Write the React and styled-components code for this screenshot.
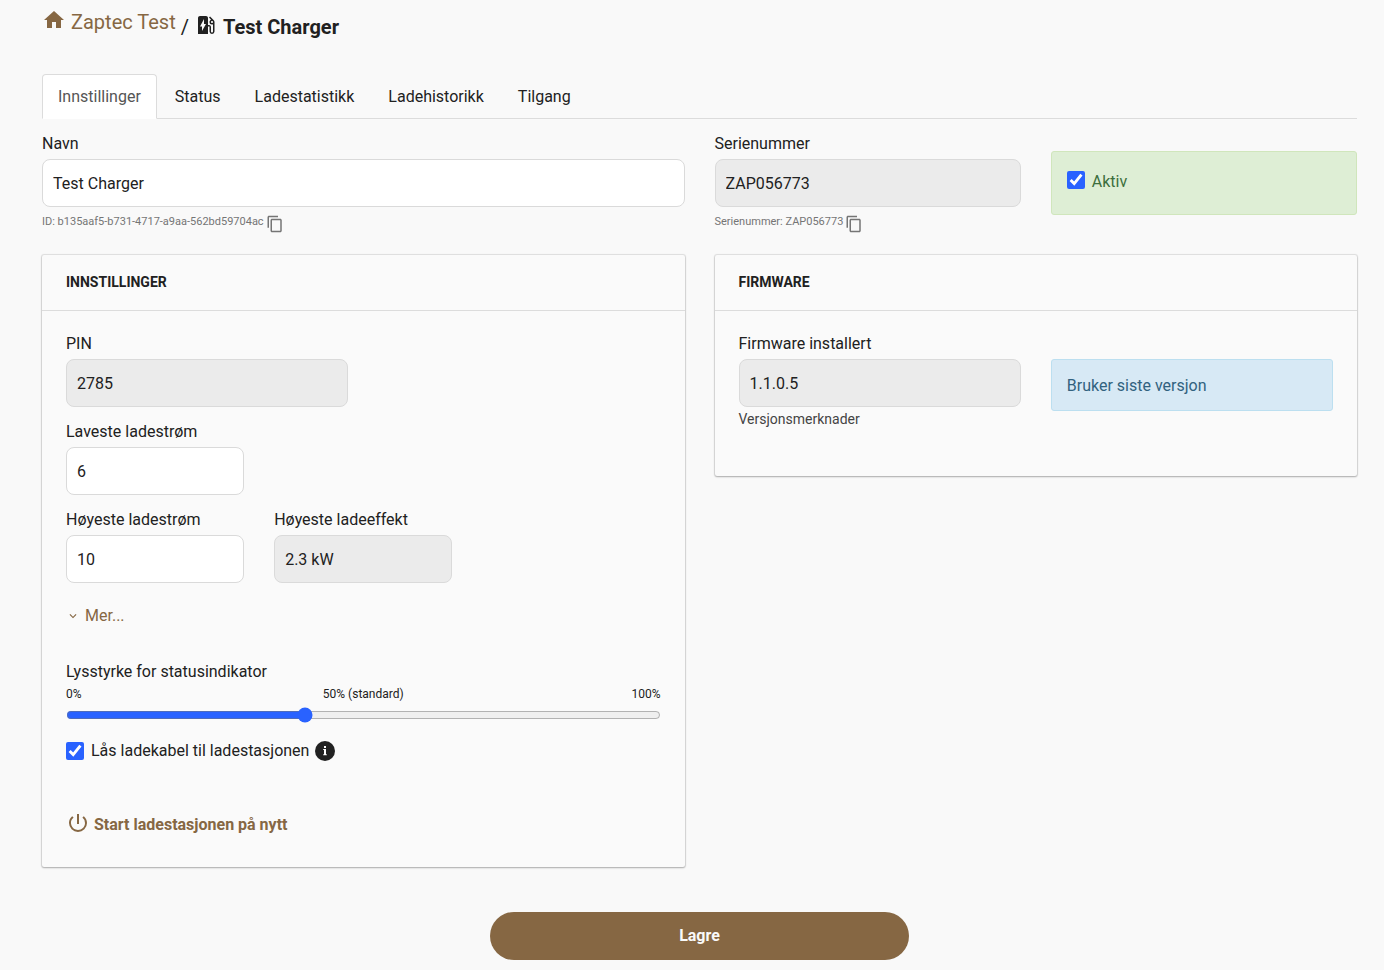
import React, { useState } from 'react'
import styled, { createGlobalStyle, css } from 'styled-components'
import { MdContentCopy, MdEvStation, MdExpandMore, MdHome, MdPowerSettingsNew } from 'react-icons/md'

const GlobalStyle = createGlobalStyle`
  * {
    box-sizing: border-box;
  }
  body {
    margin: 0;
    background: #f9f9f9;
    color: #212121;
    font-family: Roboto, "Liberation Sans", sans-serif;
    font-size: 16px;
    line-height: 24px;
  }
  input, button {
    font: inherit;
    color: inherit;
  }
`;

const Page = styled.div`
  padding: 8px 27px 10px 42px;
`;

const Breadcrumb = styled.nav`
  display: flex;
  align-items: flex-start;
  height: 66px;
  font-size: 20px;
  line-height: 28px;
`;

const HomeLink = styled.a`
  display: flex;
  align-items: flex-start;
  gap: 5px;
  color: #866743;
  text-decoration: none;
`;

const Current = styled.h1`
  display: flex;
  align-items: flex-start;
  gap: 5px;
  margin: 5px 0 0 5px;
  font-size: 20px;
  font-weight: 700;
  line-height: 28px;
`;

const Separator = styled.span`
  font-weight: 400;
`;

const Tabs = styled.nav`
  display: flex;
  gap: 2px;
  border-bottom: 1px solid #dcdcdc;
`;

const Tab = styled.a`
  padding: 10px 15px 9px;
  margin-bottom: -1px;
  border: 1px solid transparent;
  border-radius: 4px 4px 0 0;
  color: #212121;
  text-decoration: none;
  ${(props) => props.$active && css`
    color: #555;
    background: #fff;
    border-color: #dcdcdc;
    border-bottom-color: #fff;
  `}
`;

const Columns = styled.div`
  display: grid;
  grid-template-columns: repeat(${(props) => props.$count}, 1fr);
  align-items: start;
  column-gap: 30px;
`;

const TopRow = styled(Columns)`
  margin-top: 13px;
  height: 123px;
`;

const Label = styled.label`
  display: block;
  margin-bottom: 3px;
`;

const Input = styled.input`
  display: block;
  width: 100%;
  height: 48px;
  padding: 0 10px;
  border: 1px solid #dadada;
  border-radius: 8px;
  background: #fff;
  outline: none;
  &:read-only {
    background: #ebebeb;
  }
`;

const Help = styled.div`
  display: flex;
  gap: 2px;
  padding-top: 7px;
  color: #757575;
  font-size: 11px;
  line-height: 16px;
`;

const CopyButton = styled.button`
  display: flex;
  padding: 1px 0 0;
  border: 0;
  background: none;
  cursor: pointer;
`;

const Alert = styled.div`
  padding: 14px 15px 12px;
  border: 1px solid ${(props) => props.$success ? '#d0e6bc' : '#bcdff0'};
  border-radius: 3px;
  background: ${(props) => props.$success ? '#deeed5' : '#d7e9f5'};
  color: ${(props) => props.$success ? '#3c6e3d' : '#31627f'};
`;

const ActiveBox = styled(Alert)`
  height: 64px;
  margin-top: 19px;
  padding-top: 18px;
`;

const VersionBox = styled(Alert)`
  margin-top: 27px;
`;

const CheckLabel = styled.label`
  display: flex;
  align-items: flex-start;
  gap: 7px;
`;

const Checkbox = styled.input`
  width: 18px;
  height: 18px;
  margin: ${(props) => props.$top}px 0 0;
  accent-color: #2962ff;
`;

const Panel = styled.section`
  border-radius: 2px;
  background: #fafafa;
  box-shadow: 0 0 1px 1px rgba(0, 0, 0, 0.1), 0 1px 2px rgba(0, 0, 0, 0.24);
`;

const PanelTitle = styled.h2`
  margin: 0;
  padding: 15px 24px 16px;
  border-bottom: 1px solid #dcdcdc;
  font-size: 14px;
  font-weight: 700;
  line-height: 24px;
  text-transform: uppercase;
`;

const PanelBody = styled.div`
  padding: 21px 24px;
`;

const Field = styled.div`
  margin-bottom: 13px;
`;

const VersionLink = styled.a`
  display: block;
  padding-bottom: 24px;
  color: #444;
  font-size: 14px;
  text-decoration: none;
`;

const TextButton = styled.button`
  display: flex;
  align-items: center;
  gap: 5px;
  padding: 0;
  border: 0;
  background: none;
  color: #866743;
  cursor: pointer;
`;

const RestartButton = styled(TextButton)`
  gap: 4px;
  font-weight: 700;
  svg {
    margin-bottom: 4px;
  }
`;

const More = styled.div`
  margin: 8px 0 32px;
`;

const Scale = styled.div`
  display: grid;
  grid-template-columns: 1fr auto 1fr;
  font-size: 12px;
  line-height: 14px;
  span:last-child {
    text-align: right;
  }
`;

const Slider = styled.input`
  display: block;
  width: 100%;
  height: 16px;
  margin: 6px 0 16px;
  accent-color: #2962ff;
`;

const CheckRow = styled.div`
  display: flex;
  align-items: flex-start;
  gap: 6px;
  svg {
    margin-top: 2px;
  }
`;

const Restart = styled.div`
  padding: 48px 0 7px;
`;

const SaveButton = styled.button`
  display: block;
  width: calc((100% - 60px) / 3);
  height: 48px;
  margin: 45px auto 0;
  border: 0;
  border-radius: 24px;
  background: #866743;
  color: #f9f9f9;
  font-weight: 700;
  cursor: pointer;
`;

const tabs = ['Innstillinger', 'Status', 'Ladestatistikk', 'Ladehistorikk', 'Tilgang'];

const InfoIcon = () => (
  <svg width="20" height="20" viewBox="0 0 20 20" aria-hidden="true">
    <circle cx="10" cy="10" r="10" fill="#212121" />
    <path fill="#fff" d="M9 5h2v2H9zM8.2 8H11v5.2h.8v1H8.2v-1H9V9h-.8z" />
  </svg>
);

const TextField = ({ id, label, ...rest }) => (
  <Field>
    <Label htmlFor={id}>{label}</Label>
    <Input id={id} type="text" {...rest} />
  </Field>
);

const CopyField = ({ id, label, help, ...rest }) => (
  <div>
    <Label htmlFor={id}>{label}</Label>
    <Input id={id} type="text" {...rest} />
    <Help>
      <span>{help}</span>
      <CopyButton type="button" aria-label="Kopier"><MdContentCopy size={18} /></CopyButton>
    </Help>
  </div>
);

const App = () => {
  const [brightness, setBrightness] = useState(40);

  return (
    <Page>
      <GlobalStyle />
      <Breadcrumb>
        <HomeLink href="#"><MdHome size={24} />Zaptec Test</HomeLink>
        <Current><Separator>/</Separator><MdEvStation size={24} />Test Charger</Current>
      </Breadcrumb>

      <Tabs>
        {tabs.map((tab, i) => (
          <Tab key={tab} href="#" $active={i === 0}>{tab}</Tab>
        ))}
      </Tabs>

      <TopRow $count={2}>
        <CopyField
          id="name"
          label="Navn"
          defaultValue="Test Charger"
          help="ID: b135aaf5-b731-4717-a9aa-562bd59704ac"
        />
        <Columns $count={2}>
          <CopyField id="serial" label="Serienummer" value="ZAP056773" readOnly help="Serienummer: ZAP056773" />
          <ActiveBox $success>
            <CheckLabel><Checkbox type="checkbox" $top={1} defaultChecked />Aktiv</CheckLabel>
          </ActiveBox>
        </Columns>
      </TopRow>

      <Columns $count={2}>
        <Panel>
          <PanelTitle>Innstillinger</PanelTitle>
          <PanelBody>
            <Columns $count={2}>
              <TextField id="pin" label="PIN" value="2785" readOnly />
            </Columns>
            <Columns $count={3}>
              <TextField id="min" label="Laveste ladestrøm" defaultValue="6" />
            </Columns>
            <Columns $count={3}>
              <TextField id="max" label="Høyeste ladestrøm" defaultValue="10" />
              <TextField id="effect" label="Høyeste ladeeffekt" value="2.3 kW" readOnly />
            </Columns>
            <More>
              <TextButton type="button"><MdExpandMore size={14} />Mer...</TextButton>
            </More>
            <Label htmlFor="brightness">Lysstyrke for statusindikator</Label>
            <Scale>
              <span>0%</span>
              <span>50% (standard)</span>
              <span>100%</span>
            </Scale>
            <Slider
              id="brightness"
              type="range"
              value={brightness}
              onChange={(e) => setBrightness(Number(e.target.value))}
            />
            <CheckRow>
              <CheckLabel><Checkbox type="checkbox" $top={3} defaultChecked />Lås ladekabel til ladestasjonen</CheckLabel>
              <InfoIcon />
            </CheckRow>
            <Restart>
              <RestartButton type="button"><MdPowerSettingsNew size={24} />Start ladestasjonen på nytt</RestartButton>
            </Restart>
          </PanelBody>
        </Panel>

        <Panel>
          <PanelTitle>Firmware</PanelTitle>
          <PanelBody>
            <Columns $count={2}>
              <div>
                <Label htmlFor="firmware">Firmware installert</Label>
                <Input id="firmware" type="text" value="1.1.0.5" readOnly />
                <VersionLink href="#">Versjonsmerknader</VersionLink>
              </div>
              <VersionBox>Bruker siste versjon</VersionBox>
            </Columns>
          </PanelBody>
        </Panel>
      </Columns>

      <SaveButton type="submit">Lagre</SaveButton>
    </Page>
  )
}

export default App
